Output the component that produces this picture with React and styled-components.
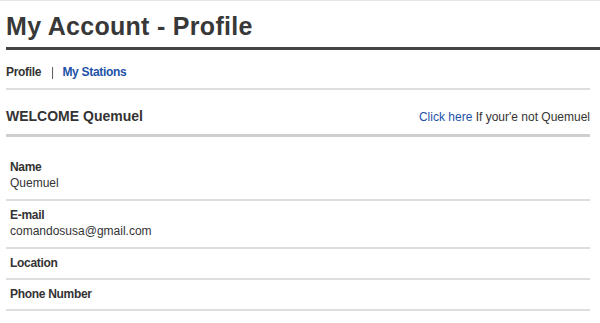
import React from 'react'
import styled, { createGlobalStyle } from 'styled-components'

const Global = createGlobalStyle`
  html, body {
    margin: 0;
    padding: 0;
    background: #fff;
  }
  body {
    font-family: "Liberation Sans", Arial, sans-serif;
    color: #333;
  }
`

const Page = styled.div`
  border-top: 1px solid #e6e6e6;
  padding-left: 6px;
`

const Title = styled.h1`
  margin: 0;
  padding: 10px 0 6px;
  font-size: 25px;
  line-height: 30px;
  letter-spacing: 0.3px;
  font-weight: bold;
  color: #383838;
  border-bottom: 3px solid #444;
`

const Content = styled.div`
  width: 584px;
`

const Tabs = styled.div`
  display: flex;
  align-items: center;
  gap: 8px;
  padding: 15px 0 8px;
  font-size: 12px;
  line-height: 15px;
  font-weight: bold;
  letter-spacing: -0.3px;
  border-bottom: 2px solid #dedede;
`

const Tab = styled.a`
  color: ${p => (p.$active ? '#333' : '#1d52a8')};
  text-decoration: none;
`

const Sep = styled.span`
  color: #555;
  font-weight: normal;
  letter-spacing: 0;
  padding-left: 2px;
  will-change: transform;
`

const Welcome = styled.div`
  display: flex;
  justify-content: space-between;
  align-items: baseline;
  padding: 18px 0 9px;
  border-bottom: 3px solid #cfcfcf;
`

const Greeting = styled.h2`
  margin: 0;
  font-size: 14px;
  line-height: 17px;
  font-weight: bold;
  color: #333;
`

const Note = styled.span`
  font-size: 12px;
  color: #333;
`

const Link = styled.a`
  color: #1d52a8;
  text-decoration: none;
`

const Fields = styled.dl`
  margin: 0;
  padding-top: 16px;
`

const Field = styled.div`
  padding: 7px 4px;
  border-bottom: 2px solid #dedede;
`

const Label = styled.dt`
  font-size: 12px;
  font-weight: bold;
  line-height: 15px;
  letter-spacing: -0.3px;
  color: #333;
`

const Value = styled.dd`
  margin: 0;
  font-size: 12px;
  line-height: 17px;
  color: #333;
`

const fields = [
  { label: 'Name', value: 'Quemuel' },
  { label: 'E-mail', value: 'comandosusa@gmail.com' },
  { label: 'Location' },
  { label: 'Phone Number' },
]

const App = () => {
  return (
    <Page>
      <Global />
      <Title>My Account - Profile</Title>
      <Content>
        <Tabs>
          <Tab $active>Profile</Tab>
          <Sep>|</Sep>
          <Tab href="#">My Stations</Tab>
        </Tabs>
        <Welcome>
          <Greeting>WELCOME Quemuel</Greeting>
          <Note>
            <Link href="#">Click here</Link> If your'e not Quemuel
          </Note>
        </Welcome>
        <Fields>
          {fields.map(f => (
            <Field key={f.label}>
              <Label>{f.label}</Label>
              {f.value && <Value>{f.value}</Value>}
            </Field>
          ))}
        </Fields>
      </Content>
    </Page>
  )
}

export default App
